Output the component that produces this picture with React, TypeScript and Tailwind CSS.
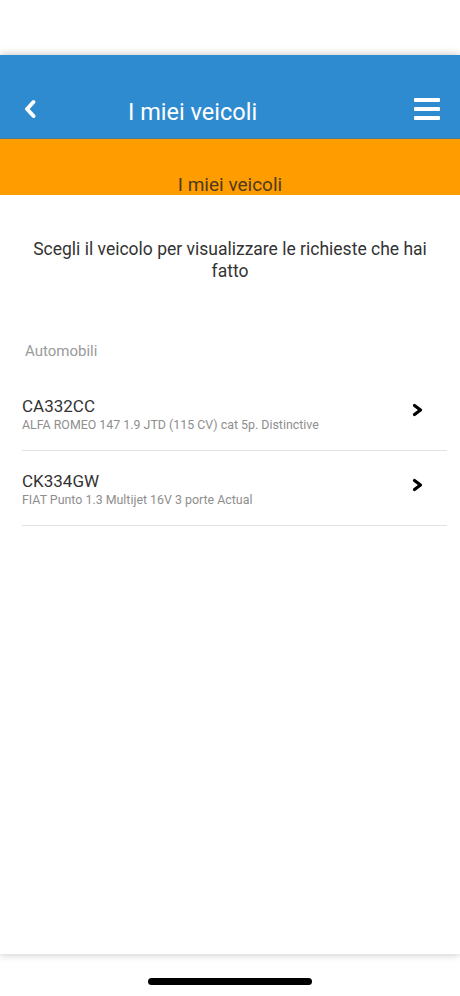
import React from "react";

const vehicles = [
  { plate: "CA332CC", desc: "ALFA ROMEO 147 1.9 JTD (115 CV) cat 5p. Distinctive" },
  { plate: "CK334GW", desc: "FIAT Punto 1.3 Multijet 16V 3 porte Actual" },
];

function Chevron({ className }: { className?: string }) {
  return (
    <svg viewBox="0 0 13 14" className={className} fill="none">
      <path d="M3.5 2.5 L9.5 7 L3.5 11.5" stroke="currentColor" strokeWidth="3.2" strokeLinecap="round" strokeLinejoin="round" />
    </svg>
  );
}

export default function App() {
  return (
    <div className="w-[460px] h-[996px] bg-white flex flex-col overflow-hidden" style={{ fontFamily: "Roboto, 'Noto Sans', sans-serif" }}>
      <div className="h-[55px] shrink-0 bg-white" />
      <div className="flex-1 flex flex-col bg-white shadow-[0_0_8px_rgba(0,0,0,0.25)] relative z-10">
        <div className="h-[84px] bg-[#2f8bcf] border-b border-[#4a7a9a] flex items-center pt-[25px]">
          <div className="w-[60px] flex items-center pl-[23px]">
            <svg viewBox="0 0 14 20" className="w-[14px] h-[20px] text-white" fill="none">
              <path d="M10.5 3 L4 10 L10.5 17" stroke="currentColor" strokeWidth="4" strokeLinecap="round" strokeLinejoin="round" />
            </svg>
          </div>
          <div className="flex-1 pl-[68px] pt-[8px] text-white text-[23.5px] leading-none">I miei veicoli</div>
          <div className="pr-[20px] flex flex-col gap-[5px]">
            <div className="w-[26px] h-[4px] bg-white rounded-[1px]" />
            <div className="w-[26px] h-[4px] bg-white rounded-[1px]" />
            <div className="w-[26px] h-[4px] bg-white rounded-[1px]" />
          </div>
        </div>
        <div className="h-[56px] bg-[#ff9c00] flex items-end justify-center">
          <span className="text-[19px] text-[#4d3b1c] leading-[20px]">I miei veicoli</span>
        </div>
        <div className="pt-[43px] px-[28px] text-center text-[17.5px] leading-[22px] text-[#333333]">
          Scegli il veicolo per visualizzare le richieste che hai fatto
        </div>
        <div className="pt-[59px] pl-[25px] text-[15px] text-[#9a9a9a] leading-[20px]">Automobili</div>
        <div className="mt-[15px] ml-[22px] mr-[13px] flex flex-col">
          {vehicles.map((v) => (
            <div key={v.plate} className="h-[75px] border-b border-[#e3e3e3] flex items-center">
              <div className="flex-1 flex flex-col pt-[2px]">
                <div className="text-[17px] leading-[21px] text-[#333333]">{v.plate}</div>
                <div className="text-[12.4px] leading-[15px] text-[#8e8e8e]">{v.desc}</div>
              </div>
              <Chevron className="w-[13px] h-[14px] text-black mr-[23px] -mt-[7px]" />
            </div>
          ))}
        </div>
      </div>
      <div className="h-[42px] shrink-0 bg-white flex justify-center pt-[24px]">
        <div className="w-[164px] h-[7px] bg-black rounded-full" />
      </div>
    </div>
  );
}
